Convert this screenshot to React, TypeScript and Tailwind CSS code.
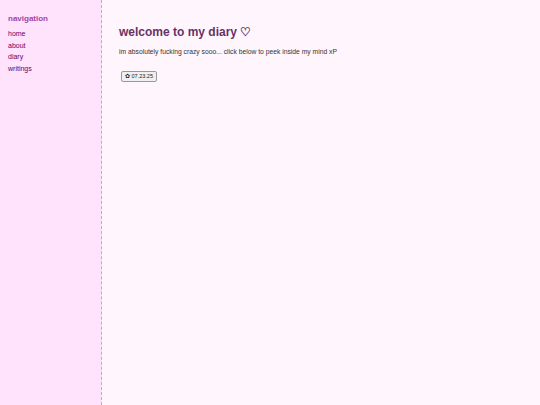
import React from 'react';

const links = ['home', 'about', 'diary', 'writings'];

export default function App() {
  return (
    <div className="flex min-h-[405px] w-full font-['Liberation_Sans',Arial,sans-serif]">
      {/* Sidebar */}
      <aside className="w-[102px] shrink-0 border-r border-dashed border-[#d79ad7] bg-[#ffe2fb] px-[8px] pt-[14px]">
        <h2 className="text-[8px] font-bold leading-[10px] text-[#a044ac]">navigation</h2>
        <ul className="mt-[4px] flex flex-col">
          {links.map((l) => (
            <li key={l} className="text-[7px] leading-[11.7px] text-[#660066]">
              <a href="#">{l}</a>
            </li>
          ))}
        </ul>
      </aside>

      {/* Main content */}
      <main className="flex-1 bg-[#fff6fd] pl-[17px] pt-[25px]">
        <h1 className="text-[12px] font-bold leading-[14px] text-[#663366]">welcome to my diary ♡</h1>
        <p className="mt-[9px] text-[6.75px] leading-[8px] text-[#333]">
          im absolutely fucking crazy sooo... click below to peek inside my mind xP
        </p>
        <button className="ml-[2px] mt-[15px] rounded-[2px] border border-[#999] bg-[#f0f0f0] px-[3px] py-[1px] text-[5.5px] leading-[7px] text-[#222]">
          ✿ 07.23.25
        </button>
      </main>
    </div>
  );
}
